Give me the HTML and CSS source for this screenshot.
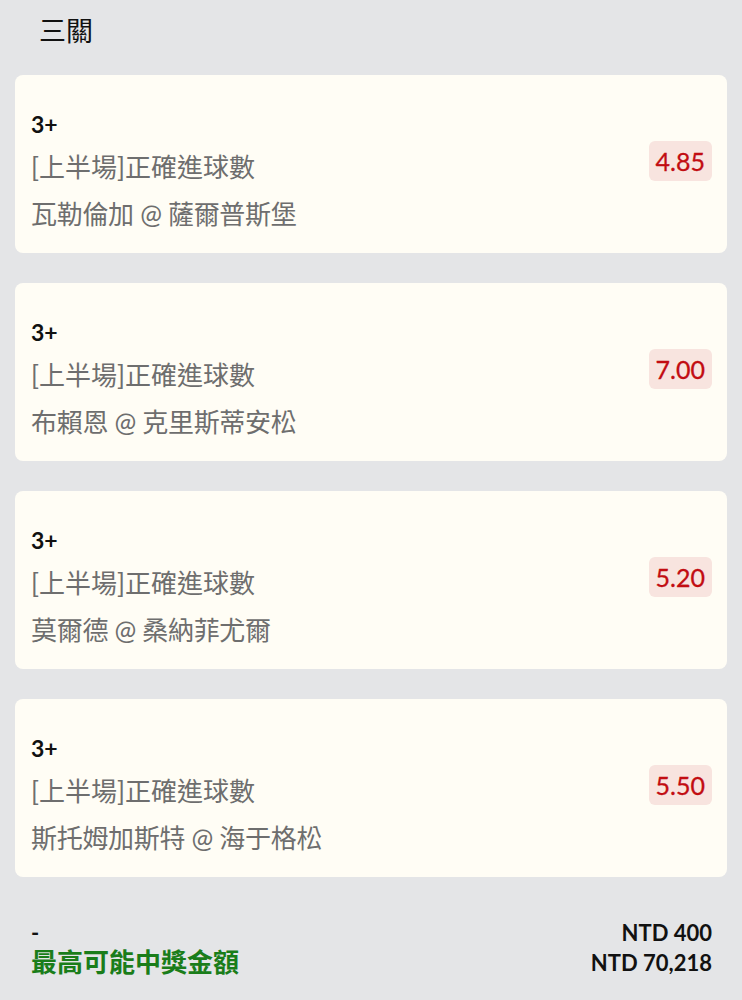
FILE: index.html
```html
<!DOCTYPE html>
<html lang="zh-Hant">
<head>
<meta charset="utf-8">
<link rel="stylesheet" href="styles.css">
</head>
<body>
<div class="page">
  <h1 class="title">三關</h1>
  <div class="list">
    <div class="card">
      <div class="info">
        <div class="pick">3+</div>
        <div class="market">[上半場]正確進球數</div>
        <div class="match">瓦勒倫加 @ 薩爾普斯堡</div>
      </div>
      <div class="odds">4.85</div>
    </div>
    <div class="card">
      <div class="info">
        <div class="pick">3+</div>
        <div class="market">[上半場]正確進球數</div>
        <div class="match">布賴恩 @ 克里斯蒂安松</div>
      </div>
      <div class="odds">7.00</div>
    </div>
    <div class="card">
      <div class="info">
        <div class="pick">3+</div>
        <div class="market">[上半場]正確進球數</div>
        <div class="match">莫爾德 @ 桑納菲尤爾</div>
      </div>
      <div class="odds">5.20</div>
    </div>
    <div class="card">
      <div class="info">
        <div class="pick">3+</div>
        <div class="market">[上半場]正確進球數</div>
        <div class="match">斯托姆加斯特 @ 海于格松</div>
      </div>
      <div class="odds">5.50</div>
    </div>
  </div>
  <div class="summary">
    <div class="summary-left">
      <div class="dash">-</div>
      <div class="max-label">最高可能中獎金額</div>
    </div>
    <div class="summary-right">
      <div class="amount">NTD 400</div>
      <div class="amount">NTD 70,218</div>
    </div>
  </div>
</div>
</body>
</html>
```

FILE: styles.css
```css
html, body {
  margin: 0;
  padding: 0;
  background: #e4e5e7;
}
body {
  font-family: Lato, "Noto Sans CJK TC", "Noto Sans", sans-serif;
  color: #111;
}
.page {
  padding: 0 15px;
}
.title {
  margin: 0;
  padding: 12px 0 0 24px;
  height: 75px;
  box-sizing: border-box;
  font-size: 27px;
  font-weight: 400;
  line-height: 38px;
  color: #111;
}
.list {
  display: flex;
  flex-direction: column;
  gap: 30px;
}
.card {
  background: #fffdf5;
  border-radius: 8px;
  height: 178px;
  box-sizing: border-box;
  padding: 29px 15px 17px 16px;
  display: flex;
  align-items: center;
  justify-content: space-between;
}
.info {
  display: flex;
  flex-direction: column;
  align-self: stretch;
}
.pick {
  font-size: 23px;
  font-weight: 700;
  line-height: 40px;
  color: #111;
}
.market, .match {
  font-size: 26px;
  line-height: 47px;
  color: #6e6e6e;
}
.match {
  letter-spacing: -0.3px;
}
.odds {
  background: #f8e4df;
  color: #c20d12;
  font-size: 25px;
  line-height: 40px;
  height: 40px;
  padding: 0 7px;
  border-radius: 6px;
  margin-top: -18px;
  -webkit-text-stroke: 0.3px #c20d12;
}
.summary {
  display: flex;
  justify-content: space-between;
  padding: 41px 15px 0 16px;
}
.summary-left, .summary-right {
  display: flex;
  flex-direction: column;
}
.summary-right {
  align-items: flex-end;
}
.dash {
  font-size: 22px;
  font-weight: 700;
  line-height: 30px;
  height: 26px;
}
.max-label {
  font-size: 26px;
  font-weight: 700;
  line-height: 36px;
  color: #1a7d1a;
}
.amount {
  font-size: 22px;
  font-weight: 700;
  line-height: 30px;
  color: #111;
}
```
